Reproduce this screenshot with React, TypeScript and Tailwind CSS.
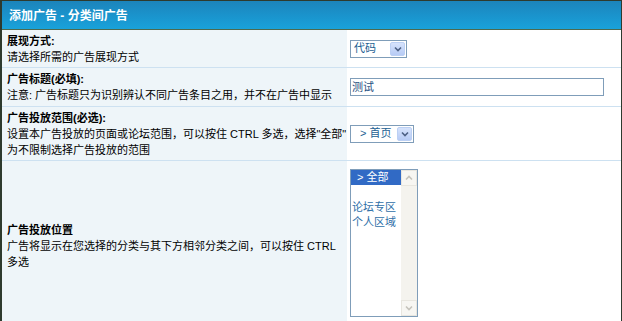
import React from 'react';

const font = { fontFamily: '"Liberation Sans", "Noto Sans CJK SC", sans-serif' };

function Chevron({ color }: { color: string }) {
  return (
    <svg width="8" height="6" viewBox="0 0 8 6">
      <path d="M1 1.5 L4 4.5 L7 1.5" fill="none" stroke={color} strokeWidth="1.6" />
    </svg>
  );
}

function DropSelect({ label, width }: { label: string; width: string }) {
  return (
    <div className={`flex items-center h-[18px] border border-[#7f9db9] bg-white ${width}`}>
      <span className="flex-1 pl-[3px] text-[11px] leading-none text-[#235f93] whitespace-pre">{label}</span>
      <span className="w-[15px] h-[14px] mr-[1px] flex items-center justify-center rounded-[2px] border border-[#bcd0f4] bg-gradient-to-b from-[#d6e3fc] to-[#b7cbf5]">
        <Chevron color="#4d6185" />
      </span>
    </div>
  );
}

function Row({
  title,
  desc,
  height,
  align = 'items-center',
  children,
}: {
  title: string;
  desc: React.ReactNode;
  height: string;
  align?: string;
  children: React.ReactNode;
}) {
  return (
    <div className={`flex border-b border-[#cde1f1] ${height}`}>
      <div className="w-[345px] shrink-0 bg-[#eef5f9] pl-[5px] flex flex-col justify-center text-[11px] leading-[16px] text-black whitespace-nowrap overflow-hidden">
        <div className="font-bold">{title}</div>
        <div>{desc}</div>
      </div>
      <div className={`flex-1 flex pl-[3px] ${align}`}>{children}</div>
    </div>
  );
}

export default function App() {
  return (
    <div
      className="w-[622px] h-[321px] overflow-hidden bg-white border-l-2 border-r border-t border-[#2e3a2e]"
      style={font}
    >
      {/* header bar */}
      <div className="h-[29px] border-b border-[#4d6a4f] bg-gradient-to-b from-[#1c84bb] via-[#1a93cc] to-[#19a2da] flex items-center pl-[7px] pt-[1px]">
        <span className="text-white font-bold text-[12px]">添加广告 - 分类间广告</span>
      </div>

      <Row title="展现方式:" desc="请选择所需的广告展现方式" height="h-[38px]">
        <DropSelect label="代码" width="w-[57px]" />
      </Row>

      <Row
        title="广告标题(必填):"
        desc="注意: 广告标题只为识别辨认不同广告条目之用，并不在广告中显示"
        height="h-[39px]"
      >
        <div className="w-[254px] h-[18px] border border-[#7f9db9] bg-white flex items-center pl-[1px] text-[11px] text-[#1f4f7f]">
          测试
        </div>
      </Row>

      <Row
        title="广告投放范围(必选):"
        desc={
          <>
            设置本广告投放的页面或论坛范围，可以按住 CTRL 多选，选择"全部"
            <br />
            为不限制选择广告投放的范围
          </>
        }
        height="h-[54px]"
      >
        <DropSelect label="  > 首页" width="w-[64px]" />
      </Row>

      <Row
        title="广告投放位置"
        desc={
          <>
            广告将显示在您选择的分类与其下方相邻分类之间，可以按住 CTRL
            <br />
            多选
          </>
        }
        height="h-[170px]"
        align="items-start"
      >
        {/* multi select list box */}
        <div className="mt-[8px] w-[68px] h-[148px] border border-[#7f9db9] bg-white flex">
          <div className="flex-1 text-[11px] leading-[15px] text-[#2f6fa8]">
            <div className="bg-[#316ac5] text-white pl-[6px]">&gt; 全部</div>
            <div className="h-[15px]" />
            <div className="pl-[1px]">论坛专区</div>
            <div className="pl-[1px]">个人区域</div>
          </div>
          <div className="w-[16px] bg-[#f4f3ee] flex flex-col justify-between">
            <div className="h-[16px] border border-[#e8e6df] bg-[#f7f6f2] flex items-center justify-center rotate-180">
              <Chevron color="#c5c3bc" />
            </div>
            <div className="h-[16px] border border-[#e8e6df] bg-[#f7f6f2] flex items-center justify-center">
              <Chevron color="#c5c3bc" />
            </div>
          </div>
        </div>
      </Row>
    </div>
  );
}
